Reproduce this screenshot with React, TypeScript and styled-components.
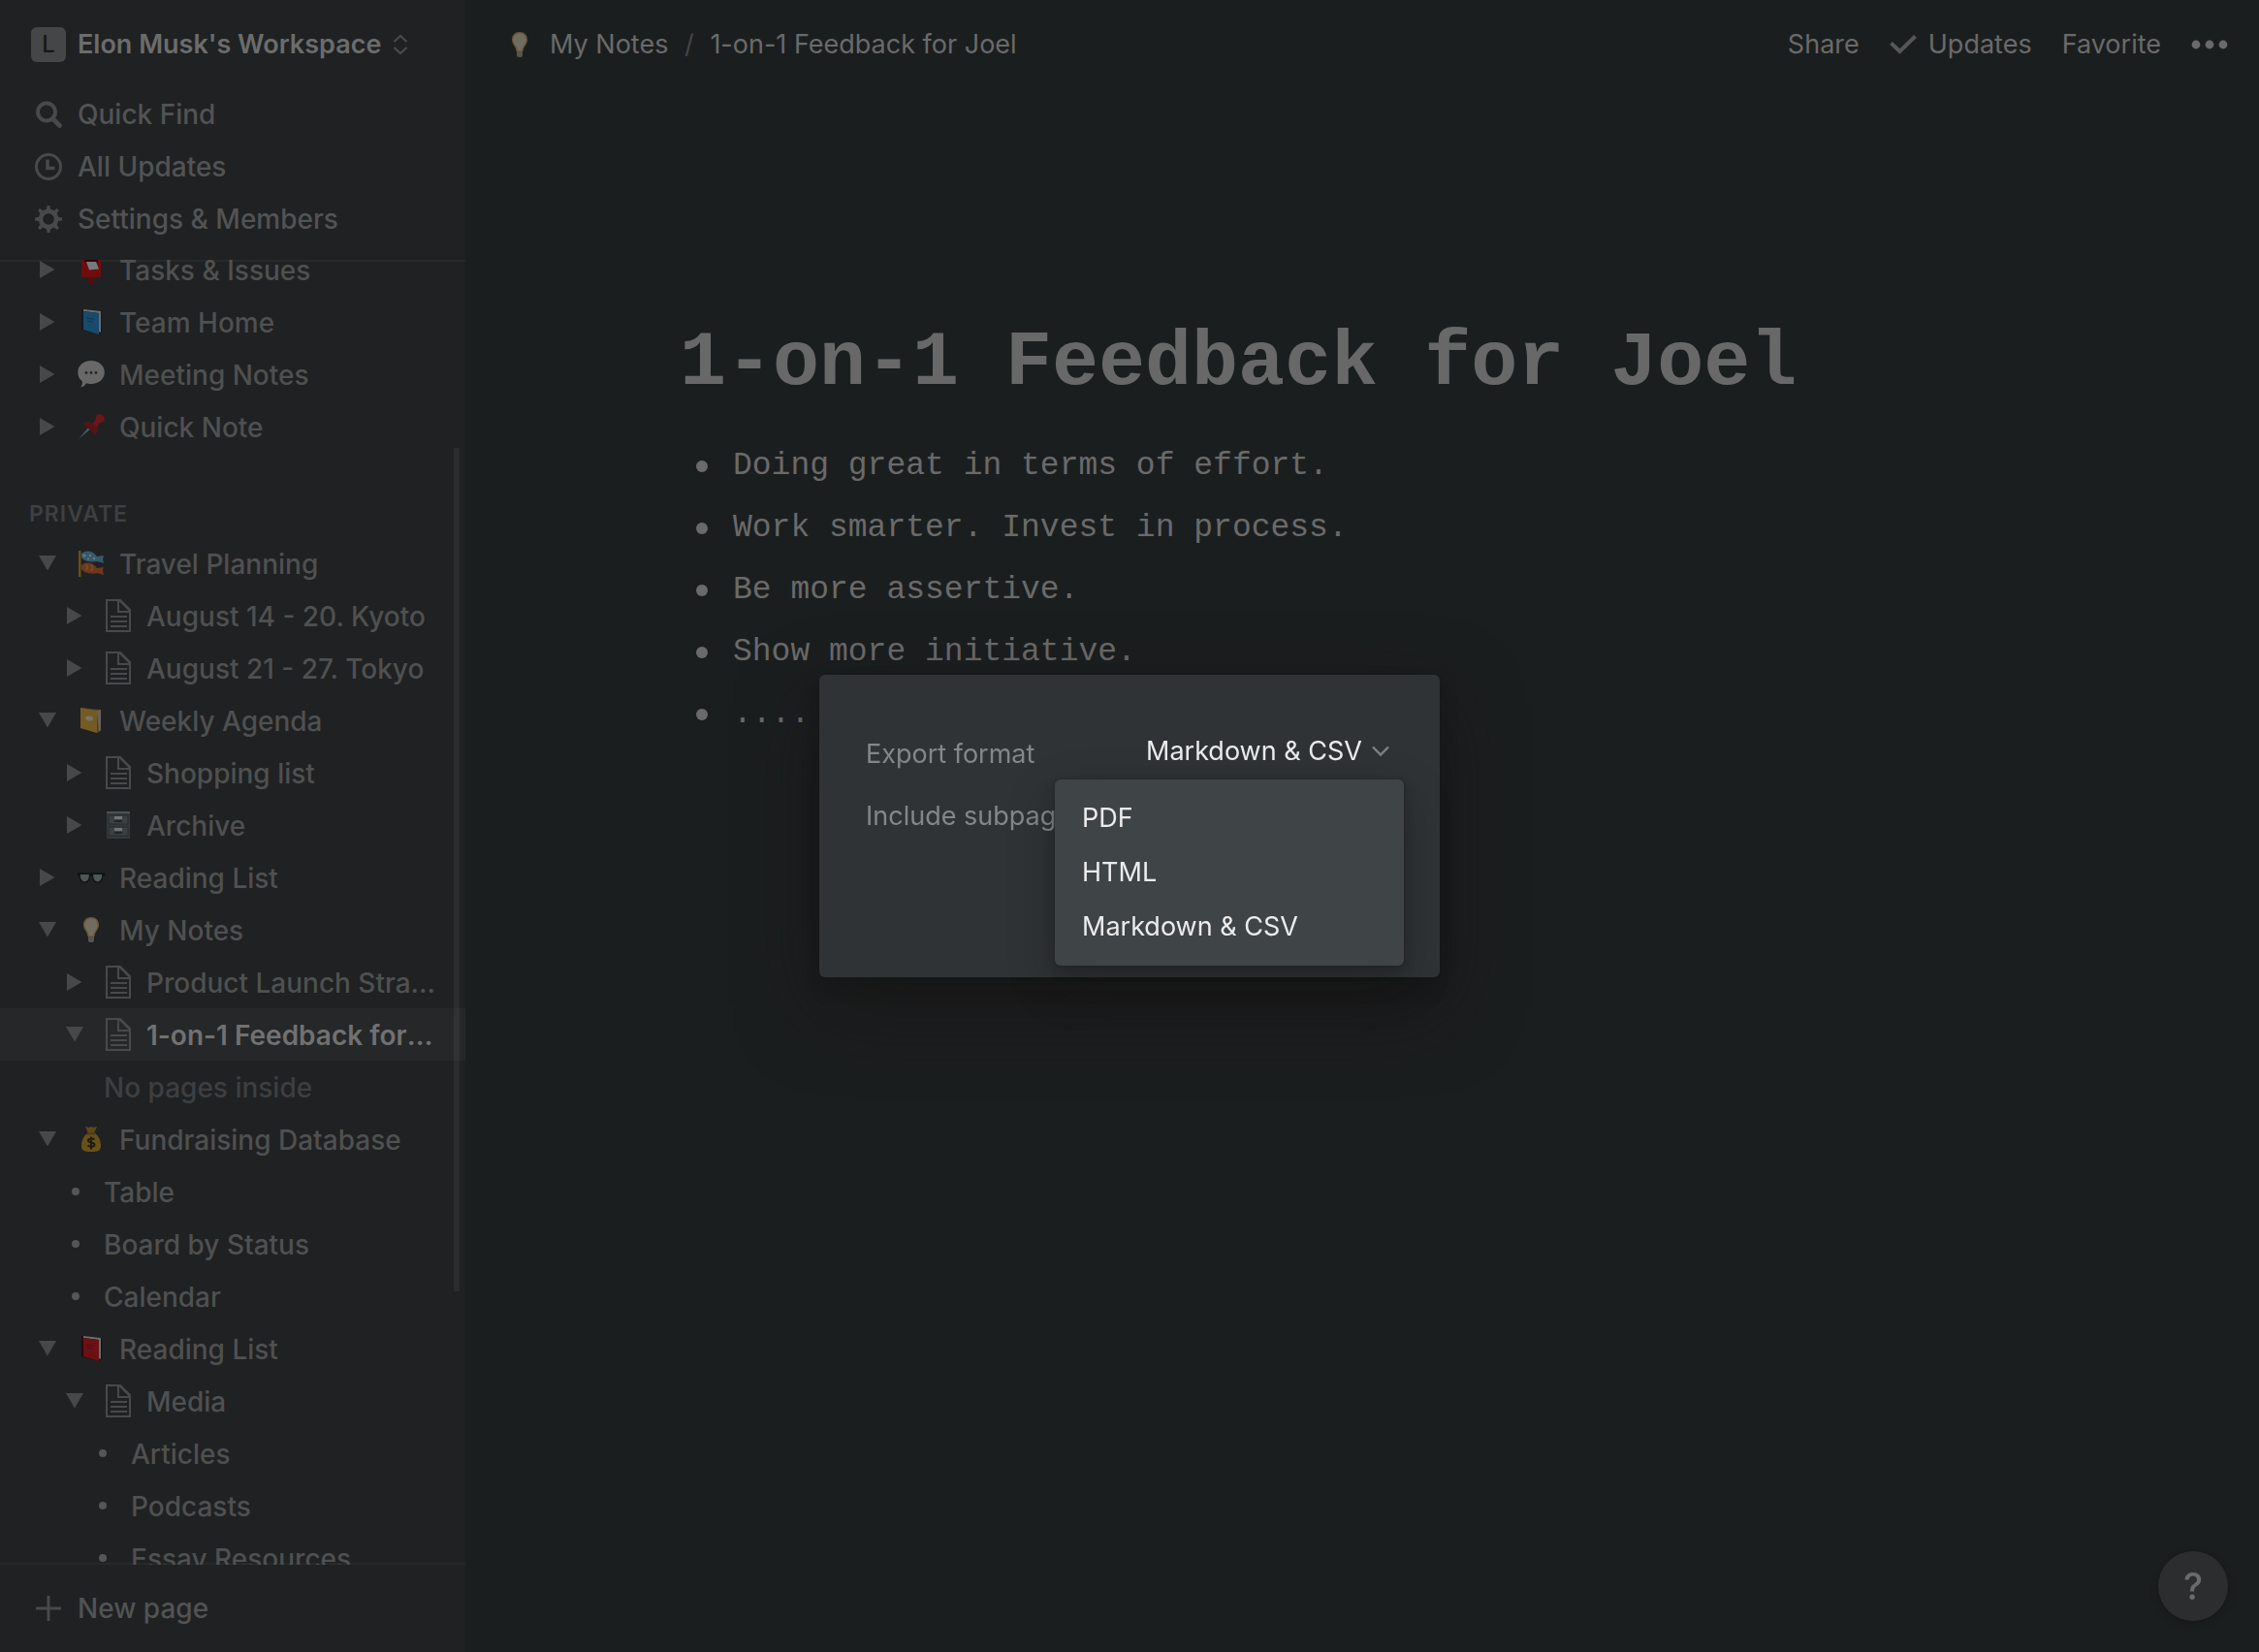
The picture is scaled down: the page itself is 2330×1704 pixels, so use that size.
import React from "react";
import styled, { createGlobalStyle, css } from "styled-components";

const sans = `Inter, "Liberation Sans", sans-serif`;
const mono = `"Liberation Mono", "DejaVu Sans Mono", monospace`;

const GlobalStyle = createGlobalStyle`
  *, *::before, *::after { box-sizing: border-box; }
  body { margin: 0; background: #1b1e1f; font-family: ${sans}; font-size: 27px; line-height: 36px; }
  button, select, input { font: inherit; color: inherit; }
  button { border: 0; background: none; padding: 0; cursor: pointer; text-align: left; }
  a { color: inherit; text-decoration: none; }
  ul, h1, h2 { margin: 0; padding: 0; list-style: none; }
  svg { display: block; flex: none; }
`;

const Shell = styled.div`
  display: flex;
  height: 100vh;
  overflow: hidden;
`;

const Sidebar = styled.aside`
  display: flex;
  flex-direction: column;
  flex: none;
  width: 480px;
  background: #202123;
  color: #525354;
  font-size: 28px;
  font-weight: 500;
`;

const SidebarTop = styled.div`
  flex: none;
  padding-bottom: 15px;
`;

const NavButton = styled.button<{ $tall?: number }>`
  display: flex;
  align-items: center;
  gap: 12px;
  width: 100%;
  height: ${(p) => p.$tall ?? 54}px;
  padding: 0 32px;
`;

const WorkspaceButton = styled(NavButton)`
  color: #6b6c6c;
  font-size: 27px;
  font-weight: 600;
`;

const Badge = styled.span`
  width: 36px;
  height: 36px;
  border-radius: 6px;
  background: #454647;
  color: #161718;
  font-size: 24px;
  font-weight: 500;
  text-align: center;
`;

const IconSlot = styled.span`
  display: flex;
  justify-content: center;
  flex: none;
  width: 36px;
  color: #48494a;
`;

const Tree = styled.nav`
  position: relative;
  flex: 1;
  min-height: 0;
  overflow: hidden;
  box-shadow: inset 0 2px #27282a, inset 0 -2px #27282a;
`;

const TreeScroll = styled.div`
  margin-top: -17px;
`;

const ScrollThumb = styled.div`
  position: absolute;
  top: 194px;
  right: 6px;
  width: 6px;
  height: 870px;
  background: rgba(255, 255, 255, 0.05);
`;

const SectionTitle = styled.h2`
  margin-top: 39px;
  padding: 6px 30px;
  color: #3e3f40;
  font-size: 23px;
  font-weight: 600;
  letter-spacing: 1px;
`;

const Row = styled.li<{ $level: number; $active?: boolean }>`
  display: flex;
  align-items: center;
  height: 54px;
  padding-right: 30px;
  padding-left: ${(p) => 29 + p.$level * 28}px;
  color: #4f5050;
  ${(p) =>
    p.$active &&
    css`
      background: #262729;
      color: #707171;
      font-weight: 600;
    `}
`;

const Toggle = styled.button`
  display: flex;
  justify-content: center;
  flex: none;
  width: 40px;
  margin-right: 10px;
  color: #474849;
`;

const Dot = styled.span`
  flex: none;
  width: 8px;
  height: 8px;
  margin: 0 25px 0 17px;
  border-radius: 50%;
  background: #555656;
`;

const PageIcon = styled.span`
  display: flex;
  justify-content: center;
  flex: none;
  width: 30px;
  margin-right: 14px;
  color: #48494a;
`;

const PageLink = styled.a`
  padding-top: 2px;
  overflow: hidden;
  text-overflow: ellipsis;
  white-space: nowrap;
`;

const EmptyNote = styled.span`
  padding-top: 2px;
  padding-left: 22px;
  color: #3d3f40;
`;

const Main = styled.main`
  flex: 1;
  min-width: 0;
  color: #6a6a6a;
`;

const TopBar = styled.header`
  display: flex;
  align-items: center;
  justify-content: space-between;
  height: 92px;
  padding: 0 32px 0 40px;
`;

const Crumbs = styled.div`
  display: flex;
  align-items: center;
`;

const CrumbIcon = styled.span`
  display: flex;
  justify-content: center;
  width: 32px;
  margin-right: 15px;
`;

const Slash = styled.span`
  width: 43px;
  color: #434546;
  text-align: center;
`;

const Actions = styled.div`
  display: flex;
  align-items: center;
  gap: 31px;
`;

const Action = styled.button`
  display: flex;
  align-items: center;
  gap: 12px;
`;

const Article = styled.article`
  max-width: 1416px;
  margin: 0 auto;
  padding-top: 235px;
  padding-left: 4px;
  font-family: ${mono};
`;

const Title = styled.h1`
  font-size: 80px;
  line-height: 96px;
  font-weight: 700;
  color: #686868;
`;

const Notes = styled.ul`
  padding: 26px 0 0 17px;
`;

const Note = styled.li`
  display: flex;
  align-items: center;
  gap: 26px;
  height: 64px;
  font-size: 33px;

  &::before {
    content: "";
    width: 12px;
    height: 12px;
    border-radius: 50%;
    background: #6a6a6a;
  }
`;

const Help = styled.button`
  position: fixed;
  right: 32px;
  bottom: 32px;
  width: 72px;
  height: 72px;
  border-radius: 50%;
  background: #2c2d2f;
  box-shadow: 0 0 0 2px rgba(15, 15, 15, 0.1), 0 4px 8px rgba(15, 15, 15, 0.2);
  color: #6a6b6b;
  font-size: 38px;
  font-weight: 500;
  text-align: center;
`;

const Overlay = styled.div`
  position: fixed;
  inset: 0;
  display: flex;
  align-items: center;
  justify-content: center;
`;

const Dialog = styled.div`
  width: 640px;
  padding: 50px 37px 134px 48px;
  border-radius: 6px;
  background: #2f3335;
  color: #848788;
  box-shadow: 0 0 0 2px rgba(15, 15, 15, 0.1), 0 10px 20px rgba(15, 15, 15, 0.2),
    0 30px 80px rgba(24, 17, 18, 0.5);
`;

const Field = styled.div`
  display: flex;
  align-items: center;
  justify-content: space-between;
  height: 64px;
`;

const Picker = styled.div`
  position: relative;
  display: flex;
  align-items: center;
  align-self: flex-start;
  gap: 10px;
  height: 58px;
  padding-right: 15px;
  color: #7f8283;
`;

const Select = styled.select`
  appearance: none;
  padding: 0;
  border: 0;
  background: transparent;
  color: #ebecec;
`;

const Menu = styled.ul`
  position: absolute;
  top: 100%;
  right: 0;
  width: 360px;
  padding: 12px 0;
  border-radius: 6px;
  background: #3f4446;
  color: #ebecec;
  box-shadow: 0 0 0 2px rgba(15, 15, 15, 0.1), 0 6px 12px rgba(15, 15, 15, 0.2),
    0 18px 48px rgba(15, 15, 15, 0.3);
`;

const MenuItem = styled.button`
  display: block;
  width: 100%;
  height: 56px;
  padding: 0 28px;
`;

const ChevronDown = () => (
  <svg width="18" height="12" viewBox="0 0 18 12" fill="none" stroke="currentColor" strokeWidth="2.4">
    <path d="M1 1.5l8 8 8-8" />
  </svg>
);

const UpDown = () => (
  <svg width="16" height="22" viewBox="0 0 16 22" fill="none" stroke="#4a4b4c" strokeWidth="2.2">
    <path d="M1.500 8L8 2l6.500 6M1.500 14L8 20l6.500-6" />
  </svg>
);

const SearchIcon = () => (
  <svg width="28" height="28" viewBox="0 0 28 28" fill="none" stroke="currentColor">
    <circle cx="12" cy="11.500" r="9" strokeWidth="4" />
    <path d="M18.500 18.500l7 7" strokeWidth="4.600" strokeLinecap="round" />
  </svg>
);

const ClockIcon = () => (
  <svg width="28" height="28" viewBox="0 0 28 28" fill="none" stroke="currentColor">
    <circle cx="14" cy="14" r="12.500" strokeWidth="3" />
    <path d="M13 6.500v9h7.500" strokeWidth="3.600" />
  </svg>
);

const GearIcon = () => (
  <svg width="28" height="28" viewBox="0 0 28 28">
    <g fill="currentColor">
      {[0, 45, 90, 135].map((a) => (
        <path key={a} transform={`rotate(${a} 14 14)`} d="M11.700 5L12.600 0h2.800l.9 5v18l-.9 5h-2.800l-.9-5z" />
      ))}
      <circle cx="14" cy="14" r="10.400" />
    </g>
    <circle cx="14" cy="14" r="5.800" fill="#202123" />
  </svg>
);

const PlusIcon = () => (
  <svg width="26" height="26" viewBox="0 0 26 26" stroke="currentColor" strokeWidth="3">
    <path d="M13 0v26M0 13h26" />
  </svg>
);

const CheckIcon = () => (
  <svg width="28" height="20" viewBox="0 0 28 20" fill="none" stroke="#555757" strokeWidth="4">
    <path d="M1.500 8.500l9 8.500L26.500 1.500" />
  </svg>
);

const DotsIcon = () => (
  <svg width="38" height="10" viewBox="0 0 38 10" fill="currentColor">
    <circle cx="5" cy="5" r="4.400" />
    <circle cx="19" cy="5" r="4.400" />
    <circle cx="33" cy="5" r="4.400" />
  </svg>
);

const Caret = ({ open }: { open: boolean }) => (
  <svg width="18" height="18" viewBox="0 0 18 18" fill="currentColor">
    {open ? <path d="M0 1h18L9 16.500z" /> : <path d="M1 0l15.500 9L1 18z" />}
  </svg>
);

const DocIcon = () => (
  <svg width="26" height="34" viewBox="0 0 26 34" fill="none" stroke="currentColor" strokeWidth="2">
    <path d="M1 1h14l10 10v22H1zM13 1v12h12M14 1l11 11" />
    <path d="M5 18h17M5 23h17M5 28h17" />
  </svg>
);

const Postbox = () => (
  <svg width="28" height="28" viewBox="0 0 28 28">
    <path d="M11.500 20h5v8h-5z" fill="#560c0f" />
    <path d="M4 3q0-3 3-3h14q3 0 3 3v17q0 2-2 2H6q-2 0-2-2z" fill="#700b0e" />
    <path d="M7 4h14v2.500H7z" fill="#2b0608" />
    <path d="M9 6h10l3 7.500-10 1z" fill="#77797b" />
  </svg>
);

const Book = ({ cover, spine }: { cover: string; spine: string }) => (
  <svg width="28" height="28" viewBox="0 0 28 28">
    <path d="M4 1l21 2v22l-3 2-18-5z" fill={spine} />
    <path d="M6 1l18 2v22l-2-1V5L6 3z" fill="#696d70" />
    <path d="M6 3l16 2v22L6 22z" fill={cover} />
    <path d="M9 10l8 1M10 13l6 1" stroke={spine} strokeWidth="1" opacity=".4" />
  </svg>
);

const Ledger = () => (
  <svg width="28" height="28" viewBox="0 0 28 28">
    <path d="M3 1l21 2v21l-3 3-18-5z" fill="#53401f" />
    <path d="M20 4l4-1v21l-2 2z" fill="#68605c" />
    <path d="M3 1l17 3v23L3 22z" fill="#745b24" />
    <ellipse cx="12" cy="12" rx="4" ry="2.500" fill="#77746a" transform="rotate(10 12 12)" />
  </svg>
);

const Speech = () => (
  <svg width="28" height="28" viewBox="0 0 28 28">
    <path d="M14 0c8 0 13.800 5 13.800 12S22 24 14 24c-2 0-3.500-.2-5-.7C8 25.500 5.500 27.500 3 27.500c1.500-1.800 2-3.500 2-6C2 19.500.3 16 .3 12 .3 5 6 0 14 0z" fill="#686868" />
    <g fill="#262626">
      <circle cx="9" cy="12.500" r="1.400" />
      <circle cx="14" cy="12.500" r="1.400" />
      <circle cx="19" cy="12.500" r="1.400" />
    </g>
  </svg>
);

const Pushpin = () => (
  <svg width="28" height="28" viewBox="0 0 28 28">
    <path d="M1 27l11-13 2 2z" fill="#4d5a63" />
    <path d="M6 11c3-2 7-2 9 0l4-4c-1-3 1-6 4-6 3 1 5 3 5 6-1 2-3 3-5 3l-3 4c2 3 1 6-2 8z" fill="#6b1719" />
    <path d="M6 11c3-2 7-2 9 0l6 5c0 3-1 5-3 6z" fill="#571315" />
  </svg>
);

const Streamer = () => (
  <svg width="28" height="28" viewBox="0 0 28 28">
    <path d="M1 1h2.500v27H1z" fill="#685016" />
    <path d="M4 4c5-4 12-3 16 3l7-1-1 4 1 4-7-2c-6 1-12 1-16-4z" fill="#35596c" />
    <path d="M4 16c5-4 12-3 16 3l7-1-1 3 1 5-7-2c-6 1-12 1-16-4z" fill="#6f381e" />
    <g fill="#6d7a80">
      <circle cx="7" cy="6" r="1.600" />
      <circle cx="13" cy="6" r="1.200" />
      <circle cx="17" cy="9" r="1.200" />
      <circle cx="11" cy="9.500" r="1" />
    </g>
    <path d="M9 15q3 3 0 6M14 16q3 3 0 6" stroke="#7b5d22" fill="none" />
  </svg>
);

const Cabinet = () => (
  <svg width="28" height="28" viewBox="0 0 28 28">
    <path d="M2 0h24v28H2z" fill="#34383a" />
    <path d="M2 0h24v2H2z" fill="#4c5254" />
    <path d="M4 4h20v9H4zM4 16h20v9H4z" fill="#3a3f41" stroke="#292c2e" />
    <path d="M10 5h8v3h-8zM10 17h8v3h-8z" fill="#707375" />
    <path d="M10 9h8v2h-8zM10 21h8v2h-8z" fill="#222526" />
  </svg>
);

const Glasses = () => (
  <svg width="28" height="28" viewBox="0 0 28 28">
    <path d="M0 9.500h28v3H0z" fill="#0e1011" />
    <path d="M2 10.500h10.500c.3 5-1.500 8.500-5 8.500S2 16 2 10.500zM15.500 10.500H26c0 5.500-2 8.500-5.500 8.500s-5.300-3.500-5-8.500z" fill="#4c5756" stroke="#0e1011" strokeWidth="1.200" />
  </svg>
);

const Bulb = () => (
  <svg width="28" height="28" viewBox="0 0 28 28">
    <path d="M11 19h6v6q0 2-3 2t-3-2z" fill="#565452" />
    <path d="M14 1c5 0 8 3.500 8 8 0 5-4 6.500-4.500 12h-7C10 15.500 6 14 6 9c0-4.500 3-8 8-8z" fill="#6a5a36" />
    <path d="M14 2.500c4 0 6.500 3 6.500 6.500 0 4-3.500 6-4.500 11h-4C11 15 7.500 13 7.500 9c0-3.500 2.500-6.500 6.500-6.500z" fill="#716c60" />
  </svg>
);

const MoneyBag = () => (
  <svg width="28" height="28" viewBox="0 0 28 28">
    <path d="M8 1l4 1 2-1 2 1 4-1-3 7h-6z" fill="#5d4718" />
    <path d="M10 8h8c4 3 6 8 6 13 0 5-3 6-10 6S4 26 4 21c0-5 2-10 6-13z" fill="#685118" />
    <path d="M9.500 8.500h9" stroke="#4a3a16" strokeWidth="2" />
    <path d="M17.500 14.500c-1-1.300-6.500-1.800-6.500 1 0 2.700 6.500 1.300 6.500 4.200 0 2.700-5.500 2.500-7 .6M14 11.500v13" fill="none" stroke="#1f1b12" strokeWidth="2" />
  </svg>
);

type Item = {
  level: number;
  name: string;
  icon?: React.ReactNode;
  open?: boolean;
  kind?: "view" | "empty";
  active?: boolean;
};

const shared: Item[] = [
  { level: 0, name: "Tasks & Issues", icon: <Postbox /> },
  { level: 0, name: "Team Home", icon: <Book cover="#184a6b" spine="#0d1a26" /> },
  { level: 0, name: "Meeting Notes", icon: <Speech /> },
  { level: 0, name: "Quick Note", icon: <Pushpin /> },
];

const personal: Item[] = [
  { level: 0, name: "Travel Planning", icon: <Streamer />, open: true },
  { level: 1, name: "August 14 - 20. Kyoto" },
  { level: 1, name: "August 21 - 27. Tokyo" },
  { level: 0, name: "Weekly Agenda", icon: <Ledger />, open: true },
  { level: 1, name: "Shopping list" },
  { level: 1, name: "Archive", icon: <Cabinet /> },
  { level: 0, name: "Reading List", icon: <Glasses /> },
  { level: 0, name: "My Notes", icon: <Bulb />, open: true },
  { level: 1, name: "Product Launch Strategy" },
  { level: 1, name: "1-on-1 Feedback for Joel", open: true, active: true },
  { level: 2, name: "No pages inside", kind: "empty" },
  { level: 0, name: "Fundraising Database", icon: <MoneyBag />, open: true },
  { level: 1, name: "Table", kind: "view" },
  { level: 1, name: "Board by Status", kind: "view" },
  { level: 1, name: "Calendar", kind: "view" },
  { level: 0, name: "Reading List", icon: <Book cover="#6b1114" spine="#2b090b" />, open: true },
  { level: 1, name: "Media", open: true },
  { level: 2, name: "Articles", kind: "view" },
  { level: 2, name: "Podcasts", kind: "view" },
  { level: 2, name: "Essay Resources", kind: "view" },
];

const TreeRow = ({ item }: { item: Item }) => {
  if (item.kind === "empty") {
    return (
      <Row $level={item.level}>
        <EmptyNote>{item.name}</EmptyNote>
      </Row>
    );
  }
  return (
    <Row $level={item.level} $active={item.active}>
      {item.kind === "view" ? (
        <Dot />
      ) : (
        <>
          <Toggle aria-label={`Toggle ${item.name}`} aria-expanded={!!item.open}>
            <Caret open={!!item.open} />
          </Toggle>
          <PageIcon>{item.icon ?? <DocIcon />}</PageIcon>
        </>
      )}
      <PageLink href="#">{item.name}</PageLink>
    </Row>
  );
};

const TreeList = ({ items }: { items: Item[] }) => (
  <ul>
    {items.map((item, i) => (
      <TreeRow key={i} item={item} />
    ))}
  </ul>
);

const notes = [
  "Doing great in terms of effort.",
  "Work smarter. Invest in process.",
  "Be more assertive.",
  "Show more initiative.",
  "....",
];

const formats = ["PDF", "HTML", "Markdown & CSV"];

export default function App() {
  const [format, setFormat] = React.useState("Markdown & CSV");
  return (
    <>
      <GlobalStyle />
      <Shell>
        <Sidebar>
          <SidebarTop>
            <WorkspaceButton $tall={91}>
              <Badge>L</Badge>
              Elon Musk's Workspace
              <UpDown />
            </WorkspaceButton>
            <NavButton>
              <IconSlot><SearchIcon /></IconSlot>
              Quick Find
            </NavButton>
            <NavButton>
              <IconSlot><ClockIcon /></IconSlot>
              All Updates
            </NavButton>
            <NavButton>
              <IconSlot><GearIcon /></IconSlot>
              Settings &amp; Members
            </NavButton>
          </SidebarTop>
          <Tree>
            <TreeScroll>
              <TreeList items={shared} />
              <SectionTitle>PRIVATE</SectionTitle>
              <TreeList items={personal} />
            </TreeScroll>
            <ScrollThumb />
          </Tree>
          <NavButton $tall={90}>
            <IconSlot><PlusIcon /></IconSlot>
            New page
          </NavButton>
        </Sidebar>
        <Main>
          <TopBar>
            <Crumbs>
              <CrumbIcon><Bulb /></CrumbIcon>
              <a href="#">My Notes</a>
              <Slash>/</Slash>
              <a href="#">1-on-1 Feedback for Joel</a>
            </Crumbs>
            <Actions>
              <Action>Share</Action>
              <Action><CheckIcon />Updates</Action>
              <Action>Favorite</Action>
              <Action aria-label="More"><DotsIcon /></Action>
            </Actions>
          </TopBar>
          <Article>
            <Title>1-on-1 Feedback for Joel</Title>
            <Notes>
              {notes.map((n) => (
                <Note key={n}>{n}</Note>
              ))}
            </Notes>
          </Article>
        </Main>
      </Shell>
      <Help aria-label="Help">?</Help>
      <Overlay>
        <Dialog role="dialog" aria-label="Export">
          <Field>
            <label htmlFor="format">Export format</label>
            <Picker>
              <Select id="format" value={format} onChange={(e) => setFormat(e.target.value)}>
                {formats.map((f) => (
                  <option key={f}>{f}</option>
                ))}
              </Select>
              <ChevronDown />
              <Menu>
                {formats.map((f) => (
                  <li key={f}>
                    <MenuItem onClick={() => setFormat(f)}>{f}</MenuItem>
                  </li>
                ))}
              </Menu>
            </Picker>
          </Field>
          <Field>
            <label htmlFor="subpages">Include subpages</label>
            <input id="subpages" type="checkbox" />
          </Field>
        </Dialog>
      </Overlay>
    </>
  );
}
